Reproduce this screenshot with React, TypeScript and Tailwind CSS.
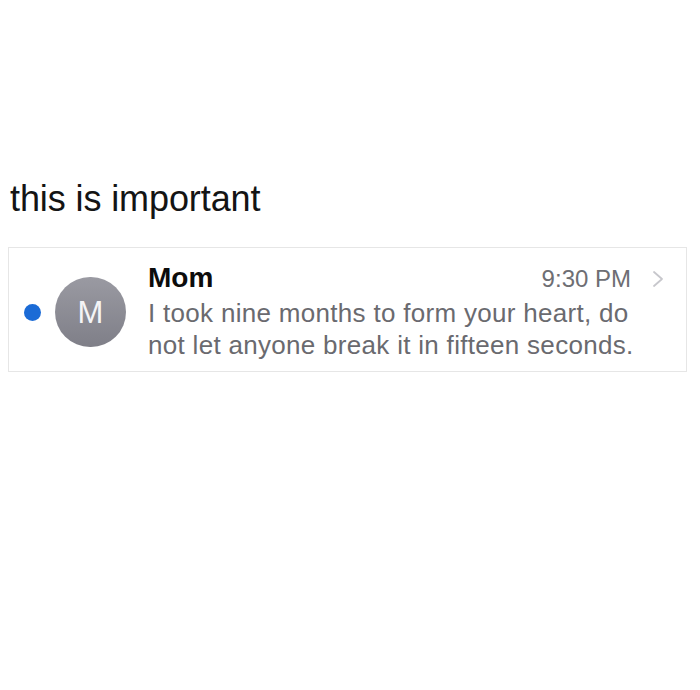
import React from "react";

export default function App() {
  return (
    <div
      className="w-[700px] h-[690px] bg-white overflow-hidden"
      style={{ fontFamily: '"Liberation Sans", Arial, sans-serif' }}
    >
      <div className="pt-[181px] pl-[10px] text-[36px] leading-none text-[#141414] tracking-[-0.1px]">
        this is important
      </div>
      <div className="mt-[30px] ml-[8px] w-[679px] h-[125px] border border-[#e6e6e6] flex">
        <div className="self-center mt-[5px] ml-[15px] w-[17px] h-[17px] rounded-full bg-[#1b6bd6] shrink-0" />
        <div className="self-center mt-[5px] ml-[14px] w-[71px] h-[70px] rounded-full bg-gradient-to-b from-[#9a9aa2] to-[#7f7f88] flex items-center justify-center shrink-0">
          <span className="text-[31px] leading-none text-[#f4f4f6]">M</span>
        </div>
        <div className="ml-[22px] pt-[16px] flex flex-col">
          <div className="flex items-baseline">
            <div className="w-[483px] flex items-baseline">
              <span className="text-[28px] leading-none font-bold text-[#0c0c0c]">Mom</span>
              <span className="flex-1" />
              <span className="text-[24px] leading-none text-[#6e6e73]">9:30 PM</span>
            </div>
            <svg
              width="12"
              height="18"
              viewBox="0 0 12 18"
              className="ml-[21px] translate-y-[1px]"
            >
              <polyline
                points="2,2 10,9 2,16"
                fill="none"
                stroke="#c7c7cc"
                strokeWidth="1.8"
                strokeLinecap="round"
                strokeLinejoin="round"
              />
            </svg>
          </div>
          <div className="mt-[5px] w-[495px] text-[26px] leading-[32px] tracking-[0.3px] text-[#6a6a6f]">
            I took nine months to form your heart, do not let anyone break it in fifteen seconds.
          </div>
        </div>
      </div>
    </div>
  );
}
